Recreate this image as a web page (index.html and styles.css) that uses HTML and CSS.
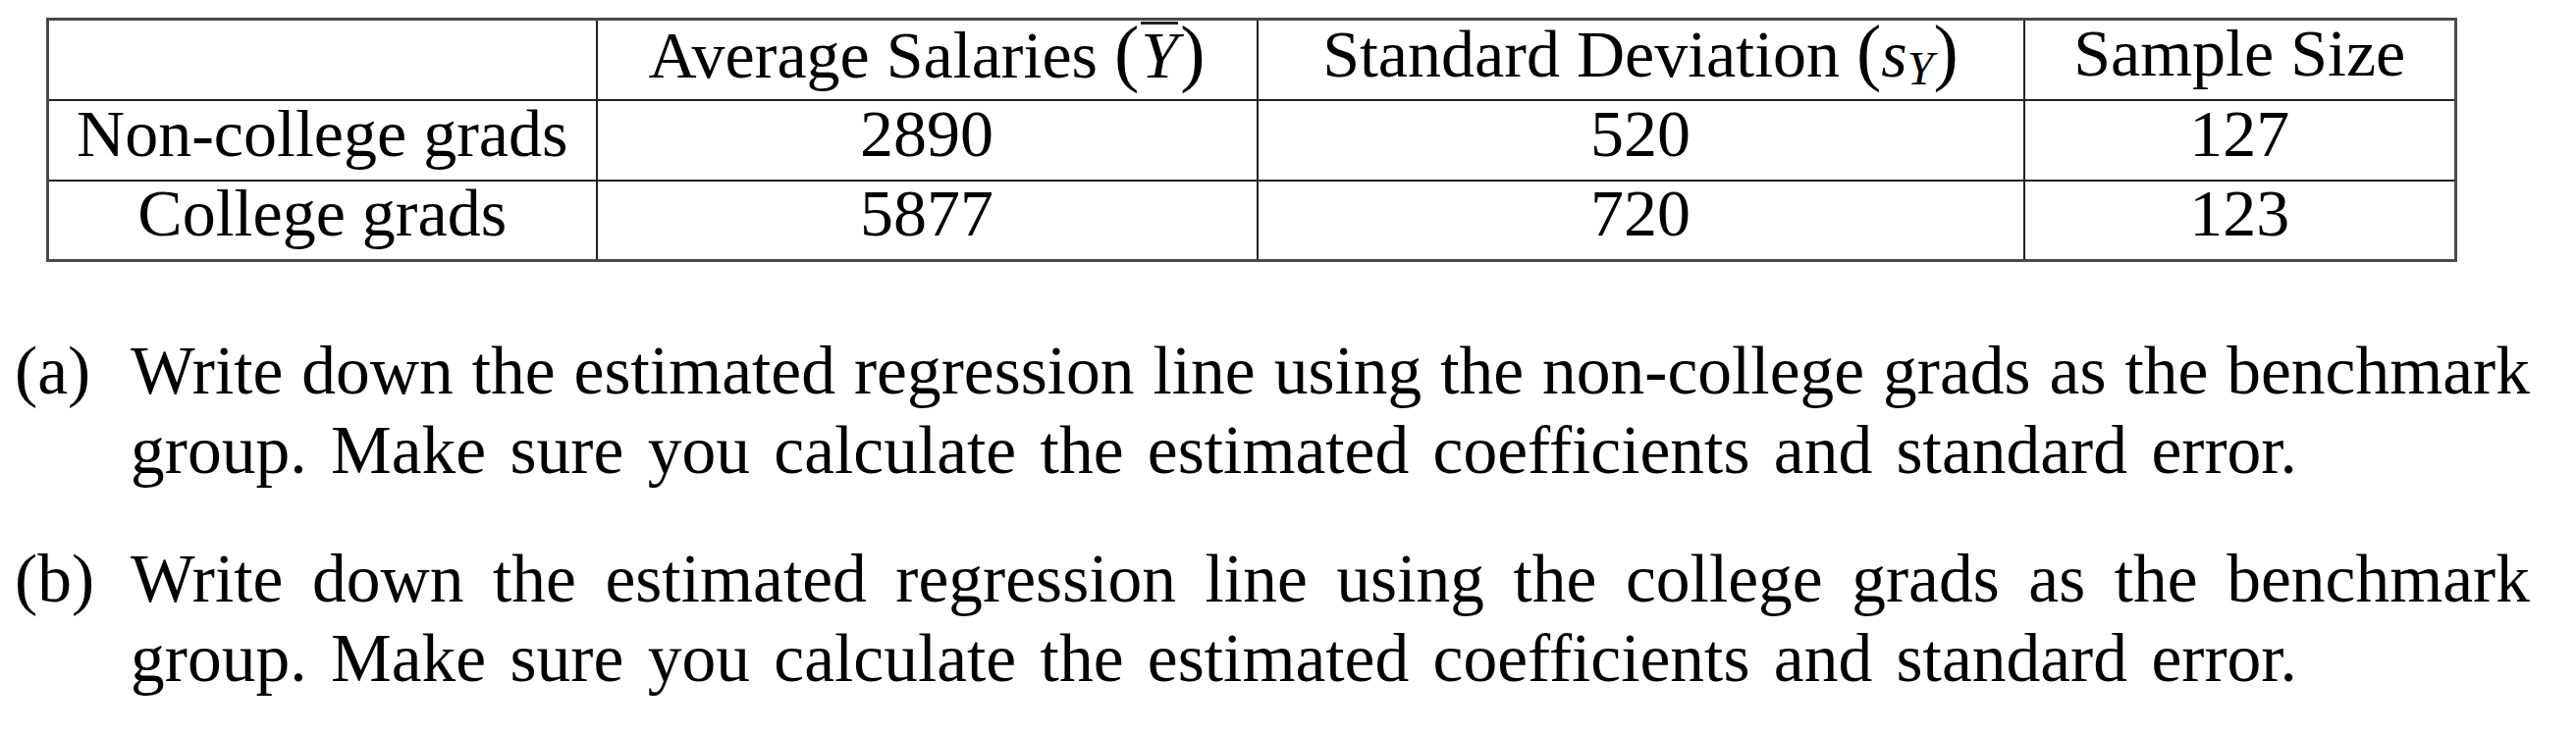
FILE: index.html
```html
<!DOCTYPE html>
<html lang="en">
<head>
    <meta charset="UTF-8">
    <meta name="viewport" content="width=device-width, initial-scale=1.0">
    <title>Salaries by education</title>
  <link rel="stylesheet" href="styles.css">
</head>
<body>
    <div class="page">
        <table class="salaries">
            <colgroup>
                <col class="col-group">
                <col class="col-mean">
                <col class="col-sd">
                <col class="col-n">
            </colgroup>
            <tr>
                <td></td>
                <td>Average Salaries <span class="paren">(</span><span class="bar">Y</span><span class="paren">)</span></td>
                <td>Standard Deviation <span class="paren">(</span><span class="math">s<sub>Y</sub></span><span class="paren">)</span></td>
                <td>Sample Size</td>
            </tr>
            <tr>
                <td>Non-college grads</td>
                <td>2890</td>
                <td>520</td>
                <td>127</td>
            </tr>
            <tr>
                <td>College grads</td>
                <td>5877</td>
                <td>720</td>
                <td>123</td>
            </tr>
        </table>

        <ol class="questions">
            <li class="question">
                <span class="label">(a)</span>
                <p class="question-text">
                    <span class="line full">Write down the estimated regression line using the non-college grads as the benchmark</span>
                    <span class="line">group. Make sure you calculate the estimated coefficients and standard error.</span>
                </p>
            </li>
            <li class="question">
                <span class="label">(b)</span>
                <p class="question-text">
                    <span class="line full">Write down the estimated regression line using the college grads as the benchmark</span>
                    <span class="line">group. Make sure you calculate the estimated coefficients and standard error.</span>
                </p>
            </li>
        </ol>
    </div>
</body>
</html>
```

FILE: styles.css
```css
* {
  box-sizing: border-box;
  margin: 0;
  padding: 0;
}

body {
  background: #ffffff;
  color: #000000;
  font-family: "Liberation Serif", "DejaVu Serif", serif;
  font-size: 68px;
}

.page {
  padding-top: 18px;
}

/* tabla */
.salaries {
  margin-left: 47px;
  width: 2453px;
  table-layout: fixed;
  border-collapse: collapse;
  border: 3px solid #4a4a4a;
}

.col-group { width: 559px; }
.col-mean { width: 673px; }
.col-sd { width: 781px; }
.col-n { width: 440px; }

.salaries td {
  height: 82px;
  border: 2px solid #222;
  text-align: center;
  vertical-align: middle;
  line-height: 60px;
  padding: 0 10px 14px;
  white-space: nowrap;
}

.paren {
  font-size: 76px;
  font-weight: 300;
}

.bar {
  display: inline-block;
  font-style: italic;
  line-height: 0.8;
  border-top: 3px solid #222;
  padding-top: 4px;
  margin: 0 2px;
}

.math {
  font-style: italic;
}

.math sub {
  font-size: 48px;
  vertical-align: -8px;
  line-height: 0;
}

/* preguntas */
.questions {
  list-style: none;
  margin-top: 70px;
  width: 2577px;
  font-size: 69.5px;
}

.question {
  display: flex;
  line-height: 81px;
  margin-bottom: 50px;
}

.label {
  width: 86px;
  padding-left: 15px;
  flex-shrink: 0;
  white-space: nowrap;
}

.question-text {
  flex: 1;
  padding-left: 47px;
}

.line {
  display: block;
  white-space: nowrap;
  word-spacing: 7px;
}

.line.full {
  word-spacing: 0;
  text-align: justify;
  text-align-last: justify;
}
```
